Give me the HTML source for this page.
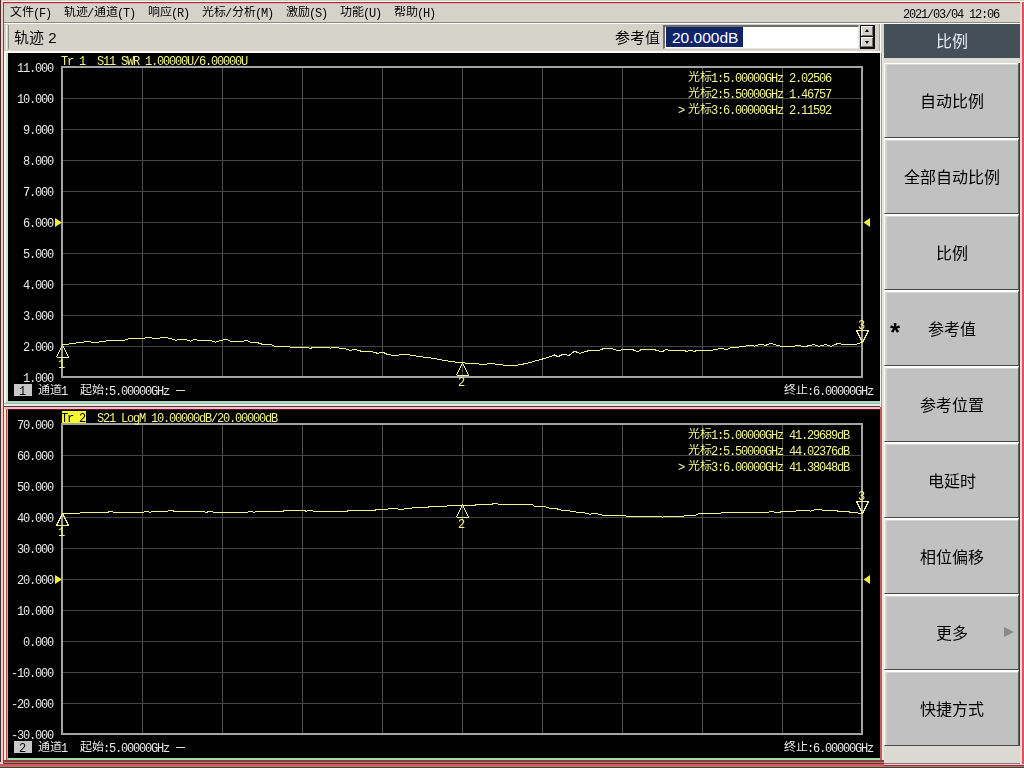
<!DOCTYPE html>
<html lang="zh-CN">
<head>
<meta charset="utf-8">
<title>Network Analyzer</title>
<style>
html,body{margin:0;padding:0}
body{width:1024px;height:768px;overflow:hidden;position:relative;background:#d5d2c9;font-family:"Liberation Sans",sans-serif}
#root{position:absolute;left:0;top:0;width:1024px;height:768px;overflow:hidden;opacity:.999}
.r{position:absolute}
.t{position:absolute;left:0;height:12px;line-height:12px;font-size:12px;white-space:nowrap}
.t span{position:absolute;top:0;height:12px;white-space:nowrap;overflow:visible}
.t .a{top:2px;font-family:"Liberation Mono",monospace;font-size:12px;letter-spacing:-1.2px;line-height:13px}
.t .c{font-family:"Liberation Sans",sans-serif;font-size:12px;line-height:12px;overflow:hidden}
.ov{position:absolute;left:0;top:0}
.btn{position:absolute;left:884px;width:135px;height:76px;background:#c1c1c1;border-top:2px solid #fff;border-left:1px solid #fbfbf7;border-bottom:1px solid #484848;border-right:1px solid #586058;box-sizing:border-box;box-shadow:inset 2px 0 0 #d2d6ce,inset 0 1px 0 #d8d8d4;font-size:16px;line-height:75px;text-align:center;color:#000}
.btn .bl{position:absolute;left:0;right:0;top:0;text-align:center}
.star{position:absolute;left:5px;top:4px;font-size:26px;font-weight:bold;line-height:72px}
.arr{position:absolute;left:119px;top:31px;width:0;height:0;border-left:10px solid #888;border-top:5px solid transparent;border-bottom:5px solid transparent}
</style>
</head>
<body>
<div id="root">
<!-- window frame -->
<div class="r" style="left:0px;top:0px;width:1024px;height:1px;background:#d0d4c0;"></div>
<div class="r" style="left:0px;top:1px;width:1024px;height:1px;background:#f6f6ee;"></div>
<div class="r" style="left:3px;top:2px;width:1021px;height:1px;background:#983040;"></div>
<div class="r" style="left:3px;top:3px;width:1019px;height:1px;background:#f6a4aa;"></div>
<div class="r" style="left:0px;top:0px;width:1px;height:762px;background:#3c3428;"></div>
<div class="r" style="left:1px;top:0px;width:2px;height:768px;background:#ffc8d0;"></div>
<div class="r" style="left:3px;top:2px;width:1px;height:764px;background:#8c4048;"></div>
<div class="r" style="left:1019px;top:62px;width:1px;height:684px;background:#384038;"></div>
<div class="r" style="left:1020px;top:2px;width:2px;height:764px;background:#ffd8d0;"></div>
<div class="r" style="left:1022px;top:2px;width:2px;height:766px;background:#dc5464;"></div>
<!-- menu bar -->
<div class="r" style="left:4px;top:22px;width:1016px;height:1px;background:#8a8880;"></div>
<div class="r" style="left:4px;top:23px;width:1016px;height:1px;background:#fbfbf7;"></div>
<div class="t " style="top:6px;color:#000"><span class="c" style="left:10px;width:24px">文件</span><span class="a" style="left:33px">(F)</span></div>
<div class="t " style="top:6px;color:#000"><span class="c" style="left:64px;width:24px">轨迹</span><span class="a" style="left:87px">/</span><span class="c" style="left:94px;width:24px">通道</span><span class="a" style="left:117px">(T)</span></div>
<div class="t " style="top:6px;color:#000"><span class="c" style="left:148px;width:24px">响应</span><span class="a" style="left:171px">(R)</span></div>
<div class="t " style="top:6px;color:#000"><span class="c" style="left:202px;width:24px">光标</span><span class="a" style="left:225px">/</span><span class="c" style="left:232px;width:24px">分析</span><span class="a" style="left:255px">(M)</span></div>
<div class="t " style="top:6px;color:#000"><span class="c" style="left:286px;width:24px">激励</span><span class="a" style="left:309px">(S)</span></div>
<div class="t " style="top:6px;color:#000"><span class="c" style="left:340px;width:24px">功能</span><span class="a" style="left:363px">(U)</span></div>
<div class="t " style="top:6px;color:#000"><span class="c" style="left:394px;width:24px">帮助</span><span class="a" style="left:417px">(H)</span></div><div class="t " style="top:7px;color:#000"><span class="a" style="left:903px">2021/03/04&nbsp;12:06</span></div>
<!-- toolbar -->
<div class="r" style="left:6px;top:25px;width:1px;height:24px;background:#f4f8f0;"></div>
<div class="r" style="left:8px;top:25px;width:1px;height:24px;background:#8c9488;"></div>
<div class="r" style="left:14px;top:29px;font-size:15px;line-height:18px;color:#000;white-space:nowrap">轨迹 2</div>
<div class="r" style="left:615px;top:29px;font-size:15px;line-height:18px;color:#000;white-space:nowrap;width:46px;overflow:hidden">参考值</div>
<div class="r" style="left:663px;top:25px;width:196px;height:24px;background:#fff;box-sizing:border-box;border-top:2px solid #6c6c6c;border-left:2px solid #6c6c6c;border-bottom:1px solid #e8e8e0;border-right:1px solid #e8e8e0"></div>
<div class="r" style="left:666px;top:27px;width:77px;height:20px;background:#10246a;"></div>
<div class="r" style="left:672px;top:28px;font-size:15.5px;line-height:20px;color:#fff;white-space:nowrap">20.000dB</div>
<!-- spinner -->
<div class="r" style="left:860px;top:25px;width:15px;height:24px;background:#101010;"></div>
<div class="r" style="left:861px;top:26px;width:12px;height:10px;background:#d4d4cc;box-sizing:border-box;border-top:1px solid #fff;border-left:1px solid #fff;border-bottom:1px solid #707070;border-right:1px solid #707070"></div>
<div class="r" style="left:861px;top:37px;width:12px;height:10px;background:#d4d4cc;box-sizing:border-box;border-top:1px solid #fff;border-left:1px solid #fff;border-bottom:1px solid #707070;border-right:1px solid #707070"></div>
<div class="r" style="left:864.5px;top:29px;width:0;height:0;border-left:2.5px solid transparent;border-right:2.5px solid transparent;border-bottom:3px solid #000"></div>
<div class="r" style="left:864.5px;top:41px;width:0;height:0;border-left:2.5px solid transparent;border-right:2.5px solid transparent;border-top:3px solid #000"></div>
<div class="r" style="left:879px;top:24px;width:1px;height:27px;background:#a4a49c;"></div>
<div class="r" style="left:880px;top:24px;width:1px;height:27px;background:#fbfbf7;"></div>
<!-- chart panel backgrounds -->
<div class="r" style="left:4px;top:51px;width:877px;height:2px;background:#fbfbf7;"></div>
<div class="r" style="left:4px;top:51px;width:2px;height:352px;background:#f8fcf0;"></div>
<div class="r" style="left:6px;top:53px;width:2px;height:350px;background:#d8dccc;"></div>
<div class="r" style="left:8px;top:53px;width:872px;height:348px;background:#000;"></div>
<div class="r" style="left:6px;top:401px;width:875px;height:2px;background:#a4dcbc;"></div>
<div class="r" style="left:4px;top:403px;width:877px;height:1px;background:#b0b0a8;"></div>
<div class="r" style="left:4px;top:404px;width:877px;height:2px;background:#ecece4;"></div>
<div class="r" style="left:4px;top:406px;width:877px;height:1px;background:#40382e;"></div>
<!-- active (trace 2) window -->
<div class="r" style="left:4px;top:407px;width:878px;height:2px;background:#ffb6c6;"></div>
<div class="r" style="left:4px;top:409px;width:2px;height:353px;background:#ffe8d8;"></div>
<div class="r" style="left:6px;top:409px;width:1px;height:353px;background:#a85040;"></div>
<div class="r" style="left:7px;top:409px;width:1px;height:353px;background:#f0a090;"></div>
<div class="r" style="left:8px;top:409px;width:872px;height:1px;background:#601820;"></div>
<div class="r" style="left:8px;top:410px;width:872px;height:348px;background:#000;"></div>
<div class="r" style="left:880px;top:407px;width:2px;height:355px;background:#c45a62;"></div>
<div class="r" style="left:882px;top:407px;width:2px;height:355px;background:#fbe2e0;"></div>
<div class="r" style="left:8px;top:758px;width:872px;height:2px;background:#98e0a8;"></div>
<div class="r" style="left:4px;top:760px;width:880px;height:2px;background:#8c3c44;"></div>
<div class="r" style="left:4px;top:762px;width:880px;height:1px;background:#b87870;"></div>
<div class="r" style="left:4px;top:763px;width:880px;height:1px;background:#703030;"></div>
<div class="r" style="left:0px;top:764px;width:884px;height:2px;background:#d05860;"></div>
<div class="r" style="left:884px;top:763px;width:136px;height:1px;background:#8c7672;"></div>
<div class="r" style="left:884px;top:764px;width:140px;height:1px;background:#ffc0d0;"></div>
<div class="r" style="left:884px;top:765px;width:140px;height:1px;background:#903040;"></div>
<div class="r" style="left:0px;top:766px;width:1024px;height:1px;background:#a87c74;"></div>
<div class="r" style="left:0px;top:767px;width:1024px;height:1px;background:#484030;"></div>
<!-- separator chart / softkeys (upper) -->
<div class="r" style="left:880px;top:53px;width:1px;height:354px;background:#f0f0ec;"></div>
<div class="r" style="left:881px;top:53px;width:1px;height:354px;background:#9c9c98;"></div>
<div class="r" style="left:882px;top:53px;width:2px;height:354px;background:#e4e4dc;"></div>
<div class="r" style="left:142px;top:67px;width:1px;height:310px;background:#505050;"></div>
<div class="r" style="left:62px;top:98px;width:800px;height:1px;background:#444444;"></div>
<div class="r" style="left:222px;top:67px;width:1px;height:310px;background:#505050;"></div>
<div class="r" style="left:62px;top:129px;width:800px;height:1px;background:#444444;"></div>
<div class="r" style="left:302px;top:67px;width:1px;height:310px;background:#505050;"></div>
<div class="r" style="left:62px;top:160px;width:800px;height:1px;background:#444444;"></div>
<div class="r" style="left:382px;top:67px;width:1px;height:310px;background:#505050;"></div>
<div class="r" style="left:62px;top:191px;width:800px;height:1px;background:#444444;"></div>
<div class="r" style="left:462px;top:67px;width:1px;height:310px;background:#505050;"></div>
<div class="r" style="left:62px;top:222px;width:800px;height:1px;background:#444444;"></div>
<div class="r" style="left:542px;top:67px;width:1px;height:310px;background:#505050;"></div>
<div class="r" style="left:62px;top:253px;width:800px;height:1px;background:#444444;"></div>
<div class="r" style="left:622px;top:67px;width:1px;height:310px;background:#505050;"></div>
<div class="r" style="left:62px;top:284px;width:800px;height:1px;background:#444444;"></div>
<div class="r" style="left:702px;top:67px;width:1px;height:310px;background:#505050;"></div>
<div class="r" style="left:62px;top:315px;width:800px;height:1px;background:#444444;"></div>
<div class="r" style="left:782px;top:67px;width:1px;height:310px;background:#505050;"></div>
<div class="r" style="left:62px;top:346px;width:800px;height:1px;background:#444444;"></div>
<div class="r" style="left:61px;top:66px;width:802px;height:2px;background:#a4a4a4;"></div>
<div class="r" style="left:61px;top:376px;width:802px;height:2px;background:#a4a4a4;"></div>
<div class="r" style="left:61px;top:66px;width:2px;height:312px;background:#a4a4a4;"></div>
<div class="r" style="left:861px;top:66px;width:2px;height:312px;background:#a4a4a4;"></div>
<div class="t " style="top:61px;color:#e8e8e8"><span class="a" style="left:17px">11.000</span></div>
<div class="t " style="top:92px;color:#e8e8e8"><span class="a" style="left:17px">10.000</span></div>
<div class="t " style="top:123px;color:#e8e8e8"><span class="a" style="left:23px">9.000</span></div>
<div class="t " style="top:154px;color:#e8e8e8"><span class="a" style="left:23px">8.000</span></div>
<div class="t " style="top:185px;color:#e8e8e8"><span class="a" style="left:23px">7.000</span></div>
<div class="t " style="top:216px;color:#e8e8e8"><span class="a" style="left:23px">6.000</span></div>
<div class="t " style="top:247px;color:#e8e8e8"><span class="a" style="left:23px">5.000</span></div>
<div class="t " style="top:278px;color:#e8e8e8"><span class="a" style="left:23px">4.000</span></div>
<div class="t " style="top:309px;color:#e8e8e8"><span class="a" style="left:23px">3.000</span></div>
<div class="t " style="top:340px;color:#e8e8e8"><span class="a" style="left:23px">2.000</span></div>
<div class="t " style="top:371px;color:#e8e8e8"><span class="a" style="left:23px">1.000</span></div>
<div class="t " style="top:54px;color:#f4f48a"><span class="a" style="left:61px">Tr&nbsp;1&nbsp;&nbsp;S11&nbsp;SWR&nbsp;1.00000U/6.00000U</span></div>
<div class="t " style="top:71px;color:#f4f48a"><span class="c" style="left:688px;width:24px">光标</span><span class="a" style="left:711px">1:5.00000GHz&nbsp;2.02506</span></div>
<div class="t " style="top:87px;color:#f4f48a"><span class="c" style="left:688px;width:24px">光标</span><span class="a" style="left:711px">2:5.50000GHz&nbsp;1.46757</span></div>
<div class="t " style="top:103px;color:#f8f8c0"><span class="a" style="left:678px">&gt;</span></div>
<div class="t " style="top:103px;color:#f4f48a"><span class="c" style="left:688px;width:24px">光标</span><span class="a" style="left:711px">3:6.00000GHz&nbsp;2.11592</span></div>
<div class="r" style="left:14px;top:384px;width:18px;height:12px;background:#c8c8c8;"></div>
<div class="t " style="top:384px;color:#000"><span class="a" style="left:19px">1</span></div>
<div class="t " style="top:384px;color:#e8e8e8"><span class="c" style="left:38px;width:24px">通道</span><span class="a" style="left:61px">1</span></div>
<div class="t " style="top:384px;color:#e8e8e8"><span class="c" style="left:80px;width:24px">起始</span><span class="a" style="left:103px">:5.00000GHz</span></div>
<div class="r" style="left:176px;top:390px;width:9px;height:1px;background:#e8e8a0;"></div>
<div class="t " style="top:384px;color:#e8e8e8"><span class="c" style="left:784px;width:24px">终止</span><span class="a" style="left:807px">:6.00000GHz</span></div>
<div class="r" style="left:142px;top:424px;width:1px;height:310px;background:#505050;"></div>
<div class="r" style="left:62px;top:455px;width:800px;height:1px;background:#444444;"></div>
<div class="r" style="left:222px;top:424px;width:1px;height:310px;background:#505050;"></div>
<div class="r" style="left:62px;top:486px;width:800px;height:1px;background:#444444;"></div>
<div class="r" style="left:302px;top:424px;width:1px;height:310px;background:#505050;"></div>
<div class="r" style="left:62px;top:517px;width:800px;height:1px;background:#444444;"></div>
<div class="r" style="left:382px;top:424px;width:1px;height:310px;background:#505050;"></div>
<div class="r" style="left:62px;top:548px;width:800px;height:1px;background:#444444;"></div>
<div class="r" style="left:462px;top:424px;width:1px;height:310px;background:#505050;"></div>
<div class="r" style="left:62px;top:579px;width:800px;height:1px;background:#444444;"></div>
<div class="r" style="left:542px;top:424px;width:1px;height:310px;background:#505050;"></div>
<div class="r" style="left:62px;top:610px;width:800px;height:1px;background:#444444;"></div>
<div class="r" style="left:622px;top:424px;width:1px;height:310px;background:#505050;"></div>
<div class="r" style="left:62px;top:641px;width:800px;height:1px;background:#444444;"></div>
<div class="r" style="left:702px;top:424px;width:1px;height:310px;background:#505050;"></div>
<div class="r" style="left:62px;top:672px;width:800px;height:1px;background:#444444;"></div>
<div class="r" style="left:782px;top:424px;width:1px;height:310px;background:#505050;"></div>
<div class="r" style="left:62px;top:703px;width:800px;height:1px;background:#444444;"></div>
<div class="r" style="left:61px;top:423px;width:802px;height:2px;background:#a4a4a4;"></div>
<div class="r" style="left:61px;top:733px;width:802px;height:2px;background:#a4a4a4;"></div>
<div class="r" style="left:61px;top:423px;width:2px;height:312px;background:#a4a4a4;"></div>
<div class="r" style="left:861px;top:423px;width:2px;height:312px;background:#a4a4a4;"></div>
<div class="t " style="top:418px;color:#e8e8e8"><span class="a" style="left:17px">70.000</span></div>
<div class="t " style="top:449px;color:#e8e8e8"><span class="a" style="left:17px">60.000</span></div>
<div class="t " style="top:480px;color:#e8e8e8"><span class="a" style="left:17px">50.000</span></div>
<div class="t " style="top:511px;color:#e8e8e8"><span class="a" style="left:17px">40.000</span></div>
<div class="t " style="top:542px;color:#e8e8e8"><span class="a" style="left:17px">30.000</span></div>
<div class="t " style="top:573px;color:#e8e8e8"><span class="a" style="left:17px">20.000</span></div>
<div class="t " style="top:604px;color:#e8e8e8"><span class="a" style="left:17px">10.000</span></div>
<div class="t " style="top:635px;color:#e8e8e8"><span class="a" style="left:23px">0.000</span></div>
<div class="t " style="top:666px;color:#e8e8e8"><span class="a" style="left:11px">-10.000</span></div>
<div class="t " style="top:697px;color:#e8e8e8"><span class="a" style="left:11px">-20.000</span></div>
<div class="t " style="top:728px;color:#e8e8e8"><span class="a" style="left:11px">-30.000</span></div>
<div class="r" style="left:62px;top:411px;width:24px;height:12px;background:#f8f830;"></div><div class="t " style="top:411px;color:#000"><span class="a" style="left:61px">Tr&nbsp;2</span></div><div class="t " style="top:411px;color:#f4f48a"><span class="a" style="left:97px">S21&nbsp;LogM&nbsp;10.00000dB/20.00000dB</span></div>
<div class="t " style="top:428px;color:#f4f48a"><span class="c" style="left:688px;width:24px">光标</span><span class="a" style="left:711px">1:5.00000GHz&nbsp;41.29689dB</span></div>
<div class="t " style="top:444px;color:#f4f48a"><span class="c" style="left:688px;width:24px">光标</span><span class="a" style="left:711px">2:5.50000GHz&nbsp;44.02376dB</span></div>
<div class="t " style="top:460px;color:#f8f8c0"><span class="a" style="left:678px">&gt;</span></div>
<div class="t " style="top:460px;color:#f4f48a"><span class="c" style="left:688px;width:24px">光标</span><span class="a" style="left:711px">3:6.00000GHz&nbsp;41.38048dB</span></div>
<div class="r" style="left:14px;top:741px;width:18px;height:12px;background:#c8c8c8;"></div>
<div class="t " style="top:741px;color:#000"><span class="a" style="left:19px">2</span></div>
<div class="t " style="top:741px;color:#e8e8e8"><span class="c" style="left:38px;width:24px">通道</span><span class="a" style="left:61px">1</span></div>
<div class="t " style="top:741px;color:#e8e8e8"><span class="c" style="left:80px;width:24px">起始</span><span class="a" style="left:103px">:5.00000GHz</span></div>
<div class="r" style="left:176px;top:747px;width:9px;height:1px;background:#e8e8a0;"></div>
<div class="t " style="top:741px;color:#e8e8e8"><span class="c" style="left:784px;width:24px">终止</span><span class="a" style="left:807px">:6.00000GHz</span></div>
<svg class="ov" width="1024" height="768" viewBox="0 0 1024 768">
<g fill="none" stroke="#f2f28c" stroke-width="1" stroke-linejoin="round" shape-rendering="crispEdges">
<polyline points="62.0,345.1 72.6,343.4 85.9,341.8 97.5,342.3 109.0,340.6 122.4,341.0 129.0,338.5 142.4,339.0 146.5,337.3 155.7,338.5 165.6,337.3 175.6,340.1 185.6,339.6 190.5,341.3 194.7,339.3 200.5,341.0 210.5,340.6 215.5,342.3 220.0,340.6 226.6,339.3 230.8,341.3 243.3,341.3 246.6,340.3 250.7,342.3 258.2,342.9 262.4,344.3 271.5,344.6 274.8,346.3 288.1,346.4 290.6,347.3 306.4,347.3 310.5,348.4 313.9,347.1 318.0,348.1 321.3,347.1 328.0,347.1 330.5,348.1 333.8,347.1 339.6,348.1 344.6,348.4 350.4,350.4 354.6,349.3 361.2,351.2 371.2,351.4 377.8,353.4 382.8,352.2 387.0,354.2 394.0,355.6 405.6,354.2 417.2,356.2 433.8,358.4 448.8,361.2 462.0,362.9 473.7,363.4 483.7,364.5 490.3,363.4 506.9,365.5 515.2,365.5 526.9,363.4 538.5,360.1 548.0,357.5 554.6,355.0 558.0,356.7 563.0,354.2 568.8,355.5 574.6,351.2 579.6,353.4 587.9,350.9 599.5,350.4 602.8,348.9 611.1,348.4 617.8,350.6 622.8,349.7 632.7,349.7 637.7,351.7 641.9,349.2 654.3,349.7 657.6,350.6 662.6,351.7 666.0,349.2 669.3,350.4 684.2,350.6 686.7,351.4 690.0,350.4 694.2,351.4 697.5,350.4 710.0,350.5 721.6,348.4 726.6,349.5 731.6,347.5 743.2,346.7 749.9,345.0 754.8,346.2 759.8,344.2 765.6,345.4 770.6,343.4 776.4,345.0 781.4,346.4 793.0,346.4 798.0,345.4 804.7,346.7 813.8,344.5 818.8,346.4 825.4,344.5 831.3,346.4 837.9,343.4 842.9,344.5 856.2,344.2 862.0,342.2"/>
<polyline points="62.0,513.6 79.3,513.6 81.0,512.6 107.5,512.6 110.0,511.0 112.5,511.4 114.0,512.6 143.2,512.6 144.9,511.4 148.2,511.4 149.8,512.6 152.3,511.4 167.3,511.4 169.0,510.2 172.3,510.2 174.0,511.4 203.8,511.4 206.3,512.6 208.8,511.4 212.1,511.4 213.8,512.6 247.4,512.6 249.0,511.4 252.4,511.4 254.0,512.6 256.5,511.4 283.1,511.4 284.8,510.2 303.9,510.2 306.4,511.4 308.9,510.2 312.2,510.2 313.8,511.4 347.0,511.4 348.7,510.2 375.3,510.2 377.0,509.2 387.8,509.2 390.0,508.4 396.5,508.4 399.0,509.4 411.4,508.4 413.0,507.3 428.0,507.3 429.7,506.1 447.1,506.1 448.8,505.1 475.4,505.1 477.0,504.3 492.0,504.3 493.6,503.1 497.0,503.1 498.6,504.3 531.8,504.3 534.3,506.1 544.3,506.1 546.8,507.3 550.1,508.4 556.3,508.6 561.3,510.2 568.0,510.6 573.0,511.7 582.9,512.6 589.5,514.2 592.8,513.6 597.8,513.9 602.8,515.2 624.4,515.2 626.9,516.4 661.0,516.4 662.6,517.2 664.3,516.4 683.4,516.4 685.0,515.2 695.8,515.2 697.5,514.2 700.0,513.6 720.0,513.5 721.6,512.5 768.1,512.5 769.8,511.4 772.3,511.4 774.8,512.5 779.8,512.5 781.4,511.4 795.5,511.4 797.2,510.2 808.8,510.2 810.5,511.4 813.0,510.2 816.3,509.2 819.6,509.2 822.1,510.2 836.2,510.2 837.9,511.4 848.7,511.4 850.3,512.5 857.0,512.5 858.7,513.5 862.0,513.5"/>
<path d="M62.5,345 L56.5,357 L68.5,357 Z"/>
<path d="M462.5,363 L456.5,375 L468.5,375 Z"/>
<path d="M862.5,342.5 L856.5,330.5 L868.5,330.5 Z"/>
<path d="M62.5,513.5 L56.5,525.5 L68.5,525.5 Z"/>
<path d="M462.5,505 L456.5,517 L468.5,517 Z"/>
<path d="M862.5,513.5 L856.5,501.5 L868.5,501.5 Z"/>
</g>
<g fill="#eef03c">
<path d="M55,218.0 L62,222.5 L55,227.0 Z"/>
<path d="M870,218.0 L863.5,222.5 L870,227.0 Z"/>
<path d="M55,575.0 L62,579.5 L55,584.0 Z"/>
<path d="M870,575.0 L863.5,579.5 L870,584.0 Z"/>
</g>
</svg>
<div class="t " style="top:357px;color:#f4f48a"><span class="a" style="left:58px">1</span></div>
<div class="t " style="top:375px;color:#f4f48a"><span class="a" style="left:458px">2</span></div>
<div class="t " style="top:318px;color:#f4f48a"><span class="a" style="left:858px">3</span></div>
<div class="t " style="top:525px;color:#f4f48a"><span class="a" style="left:58px">1</span></div>
<div class="t " style="top:517px;color:#f4f48a"><span class="a" style="left:458px">2</span></div>
<div class="t " style="top:489px;color:#f4f48a"><span class="a" style="left:858px">3</span></div>
<!-- softkey panel -->
<div class="r" style="left:884px;top:24px;width:136px;height:34px;background:#454f58;"></div>
<div class="r" style="left:884px;top:24px;width:136px;height:34px;line-height:35px;font-size:16px;color:#e4ecf4;text-align:center">比例</div>
<div class="r" style="left:884px;top:58px;width:135px;height:4px;background:#dcdcd4;"></div>
<div class="btn" style="top:62px"><span class="bl">自动比例</span></div>
<div class="btn" style="top:138px"><span class="bl">全部自动比例</span></div>
<div class="btn" style="top:214px"><span class="bl">比例</span></div>
<div class="btn" style="top:290px"><span class="star">*</span><span class="bl">参考值</span></div>
<div class="btn" style="top:366px"><span class="bl">参考位置</span></div>
<div class="btn" style="top:442px"><span class="bl">电延时</span></div>
<div class="btn" style="top:518px"><span class="bl">相位偏移</span></div>
<div class="btn" style="top:594px"><span class="arr"></span><span class="bl">更多</span></div>
<div class="btn" style="top:670px"><span class="bl">快捷方式</span></div>
<div class="r" style="left:884px;top:746px;width:136px;height:17px;background:#dadad2;"></div>
<div class="r" style="left:884px;top:62px;width:136px;height:1px;background:#dcdcd4;"></div>
</div>
</body>
</html>
